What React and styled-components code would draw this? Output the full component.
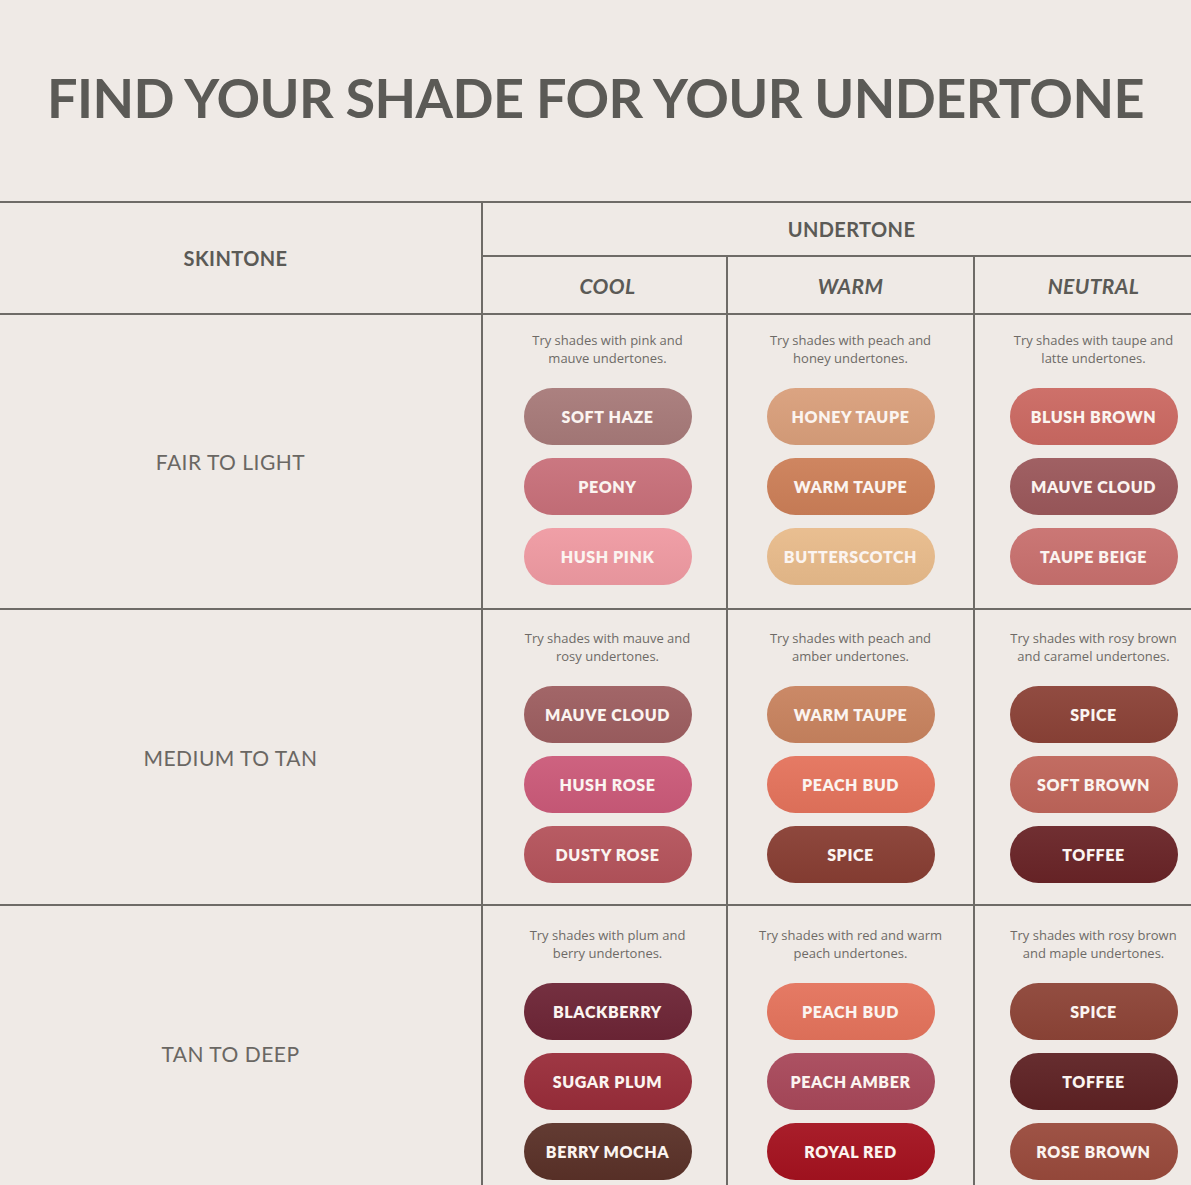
import styled, { createGlobalStyle } from 'styled-components'

const GlobalStyle = createGlobalStyle`
  html, body {
    margin: 0;
    padding: 0;
    background: #efeae6;
    overflow: hidden;
  }
  body {
    font-family: Lato, "Open Sans", sans-serif;
  }
`

const Page = styled.div`
  background: #efeae6;
  min-height: 1185px;
  padding-top: 70px;
`

const Title = styled.h1`
  margin: 0;
  text-align: center;
  font-family: Lato, sans-serif;
  font-weight: 700;
  font-size: 54px;
  line-height: 56px;
  letter-spacing: -0.6px;
  color: #5b5a56;
`

const Table = styled.div`
  margin-top: 75px;
  margin-left: -10px;
  width: 1222px;
  display: grid;
  grid-template-columns: 491px 243px 245px 237px;
  grid-template-rows: 52px 56px 293px 294px 294px;
  gap: 2px;
  background: #6e6b67;
  border-top: 2px solid #6e6b67;
`

const Cell = styled.div`
  background: #efeae6;
  display: flex;
  align-items: center;
  justify-content: center;
  color: #5b5a56;
`

const SkinHead = styled(Cell)`
  grid-row: 1 / span 2;
  font-weight: 700;
  font-size: 20px;
  letter-spacing: 0.4px;
`

const UnderHead = styled(Cell)`
  grid-column: 2 / span 3;
  padding-left: 8px;
  font-weight: 700;
  font-size: 20px;
  letter-spacing: 0.4px;
`

const ToneHead = styled(Cell)`
  padding-left: ${p => p.$shift || 0}px;
  font-weight: 700;
  font-style: italic;
  font-size: 21px;
  letter-spacing: 0.4px;
`

const SkinLabel = styled(Cell)`
  padding-right: 10px;
  font-size: 21px;
  font-weight: 400;
  color: #6a6763;
  letter-spacing: 0.5px;
`

const ShadeCell = styled(Cell)`
  flex-direction: column;
  justify-content: flex-start;
  padding-top: ${p => p.$top}px;
  padding-left: ${p => p.$shift || 0}px;
`

const Desc = styled.p`
  margin: 0 0 21px;
  text-align: center;
  font-family: "Open Sans", sans-serif;
  font-size: 13px;
  line-height: 18px;
  color: #6e6a66;
`

const Pills = styled.div`
  display: flex;
  flex-direction: column;
  gap: 13px;
`

const Pill = styled.div`
  width: 168px;
  height: 57px;
  border-radius: 29px;
  display: flex;
  align-items: center;
  justify-content: center;
  background:
    linear-gradient(180deg, rgba(255,255,255,0.05), rgba(0,0,0,0.04)),
    ${p => p.$color};
  color: #fbf4f0;
  font-weight: 800;
  font-size: 16px;
  letter-spacing: 0.6px;
`

const rows = [
  {
    label: 'FAIR TO LIGHT',
    top: 16,
    cells: [
      { desc: ['Try shades with pink and', 'mauve undertones.'], shades: [['SOFT HAZE', '#a77a79'], ['PEONY', '#c8707a'], ['HUSH PINK', '#ef9aa2']] },
      { desc: ['Try shades with peach and', 'honey undertones.'], shades: [['HONEY TAUPE', '#d99f7b'], ['WARM TAUPE', '#cc7f58'], ['BUTTERSCOTCH', '#e8bb8b']] },
      { desc: ['Try shades with taupe and', 'latte undertones.'], shades: [['BLUSH BROWN', '#cb6962'], ['MAUVE CLOUD', '#9b585b'], ['TAUPE BEIGE', '#c8706e']] },
    ],
  },
  {
    label: 'MEDIUM TO TAN',
    top: 19,
    cells: [
      { desc: ['Try shades with mauve and', 'rosy undertones.'], shades: [['MAUVE CLOUD', '#9d5e60'], ['HUSH ROSE', '#cb5a79'], ['DUSTY ROSE', '#b4535b']] },
      { desc: ['Try shades with peach and', 'amber undertones.'], shades: [['WARM TAUPE', '#c8835f'], ['PEACH BUD', '#e4735c'], ['SPICE', '#883e33']] },
      { desc: ['Try shades with rosy brown', 'and caramel undertones.'], shades: [['SPICE', '#8b4237'], ['SOFT BROWN', '#bf655a'], ['TOFFEE', '#692427']] },
    ],
  },
  {
    label: 'TAN TO DEEP',
    top: 20,
    cells: [
      { desc: ['Try shades with plum and', 'berry undertones.'], shades: [['BLACKBERRY', '#6d2536'], ['SUGAR PLUM', '#992d3a'], ['BERRY MOCHA', '#5a3128']] },
      { desc: ['Try shades with red and warm', 'peach undertones.'], shades: [['PEACH BUD', '#e4735c'], ['PEACH AMBER', '#a8485a'], ['ROYAL RED', '#a4121f']] },
      { desc: ['Try shades with rosy brown', 'and maple undertones.'], shades: [['SPICE', '#8d4437'], ['TOFFEE', '#5e2224'], ['ROSE BROWN', '#994a3c']] },
    ],
  },
]

export default function App () {
  return (
    <Page>
      <GlobalStyle />
      <Title>FIND YOUR SHADE FOR YOUR UNDERTONE</Title>
      <Table>
        <SkinHead>SKINTONE</SkinHead>
        <UnderHead>UNDERTONE</UnderHead>
        <ToneHead $shift={6}>COOL</ToneHead>
        <ToneHead>WARM</ToneHead>
        <ToneHead>NEUTRAL</ToneHead>
        {rows.map(row => (
          <>
            <SkinLabel key={row.label}>{row.label}</SkinLabel>
            {row.cells.map((cell, i) => (
              <ShadeCell key={row.label + i} $top={row.top} $shift={i === 0 ? 6 : 0}>
                <Desc>{cell.desc[0]}<br />{cell.desc[1]}</Desc>
                <Pills>
                  {cell.shades.map(([name, color]) => (
                    <Pill key={name} $color={color}>{name}</Pill>
                  ))}
                </Pills>
              </ShadeCell>
            ))}
          </>
        ))}
      </Table>
    </Page>
  )
}
